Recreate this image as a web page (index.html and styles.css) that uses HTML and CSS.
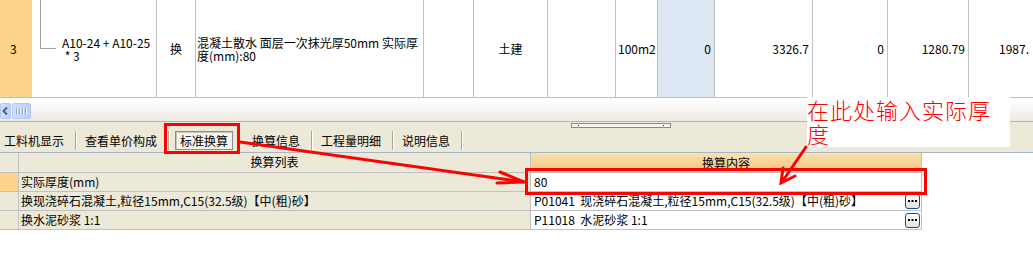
FILE: index.html
```html
<!DOCTYPE html>
<html lang="zh-CN">
<head>
    <meta charset="UTF-8">
    <title>标准换算</title>
    <link rel="stylesheet" href="styles.css">
</head>
<body>
    <!-- 定额行 -->
    <div class="item-grid">
        <div class="cell rownum">3</div>
        <div class="cell code">
            <span class="tree"></span>
            <span class="two-line">A10-24 + A10-25<br> * 3</span>
        </div>
        <div class="cell center">换</div>
        <div class="cell desc"><span class="two-line">混凝土散水 面层一次抹光厚50mm 实际厚<br>度(mm):80</span></div>
        <div class="cell"></div>
        <div class="cell center">土建</div>
        <div class="cell"></div>
        <div class="cell unit">100m2</div>
        <div class="cell num current">0</div>
        <div class="cell num">3326.7</div>
        <div class="cell num">0</div>
        <div class="cell num">1280.79</div>
        <div class="cell last">1987.</div>
    </div>

    <div class="hscroll">
        <span class="sb-btn">
            <svg width="7" height="8" viewBox="0 0 7 8"><path d="M5 0.5 L1.5 4 L5 7.5" fill="none" stroke="#4d6185" stroke-width="2"/></svg>
        </span>
        <span class="sb-thumb"><i></i><i></i><i></i><i></i></span>
    </div>

    <div class="toolbar">
        <div class="grip-row"><span class="grip"><i></i><i></i></span></div>
        <div class="tabs">
            <span class="tab first">工料机显示</span>
            <span class="sep"></span>
            <span class="tab">查看单价构成</span>
            <span class="sep"></span>
            <span class="tab pressed">标准换算</span>
            <span class="tab">换算信息</span>
            <span class="sep"></span>
            <span class="tab">工程量明细</span>
            <span class="sep"></span>
            <span class="tab">说明信息</span>
            <span class="sep"></span>
        </div>
    </div>

    <!-- 换算表 -->
    <div class="calc-grid">
        <div class="calc-row head">
            <span class="ind"></span>
            <span class="left">换算列表</span>
            <span class="right">换算内容</span>
        </div>
        <div class="calc-row">
            <span class="ind active"></span>
            <span class="left">实际厚度(mm)</span>
            <span class="right">80</span>
        </div>
        <div class="calc-row">
            <span class="ind"></span>
            <span class="left">换现浇碎石混凝土,粒径15mm,C15(32.5级)【中(粗)砂】</span>
            <span class="right">
                <span class="val">P01041  现浇碎石混凝土,粒径15mm,C15(32.5级)【中(粗)砂】</span>
                <span class="more"><svg width="13" height="13" viewBox="0 0 13 13"><rect x="2" y="5" width="2" height="2"/><rect x="5.5" y="5" width="2" height="2"/><rect x="9" y="5" width="2" height="2"/></svg></span>
            </span>
        </div>
        <div class="calc-row">
            <span class="ind"></span>
            <span class="left">换水泥砂浆 1:1</span>
            <span class="right">
                <span class="val">P11018  水泥砂浆 1:1</span>
                <span class="more"><svg width="13" height="13" viewBox="0 0 13 13"><rect x="2" y="5" width="2" height="2"/><rect x="5.5" y="5" width="2" height="2"/><rect x="9" y="5" width="2" height="2"/></svg></span>
            </span>
        </div>
    </div>

    <!-- 标注 -->
    <div class="note">在此处输入实际厚<br>度</div>
    <svg class="marks" width="1033" height="260" viewBox="0 0 1033 260">
        <g fill="none" stroke="#ff0000" stroke-width="3">
            <rect x="165.5" y="124.5" width="73" height="28"/>
            <rect x="526.5" y="169.5" width="399" height="24"/>
        </g>
        <g stroke="#ff0000" stroke-width="3" stroke-linecap="round" fill="none">
            <path d="M240 142 L524 182"/>
            <path d="M500 172 L524 182 L497 183"/>
            <path d="M806 147 L782 182"/>
            <path d="M783 168 L781 183 L795 176"/>
        </g>
    </svg>
</body>
</html>
```

FILE: styles.css
```css
body {
    margin: 0;
    width: 1033px;
    height: 260px;
    overflow: hidden;
    position: relative;
    background-color: #fff;
    font-family: "Noto Sans CJK SC", sans-serif;
    font-size: 12px;
    color: #000;
}
.item-grid {
    display: grid;
    grid-template-columns: 32px 125px 39px 228px 50px 74px 68px 42px 57px 98px 75px 81px 1fr;
    height: 98px;
    border-bottom: 1px solid #c0c0c0;
    box-sizing: border-box;
}
.item-grid .cell {
    display: flex;
    align-items: center;
    border-right: 1px solid #c0c0c0;
    white-space: pre;
    overflow: hidden;
}
.item-grid .rownum {
    background-color: #fdd28c;
    border-right: none;
    padding-left: 10px;
}
.item-grid .code {
    align-items: flex-start;
}
.tree {
    width: 15px;
    height: 48px;
    margin-left: 8px;
    margin-right: 6px;
    border-left: 1px solid #a0a0a0;
    border-bottom: 1px solid #a0a0a0;
    flex-shrink: 0;
}
.item-grid .code .two-line {
    align-self: center;
}
.two-line {
    line-height: 13px;
}
.item-grid .center {
    justify-content: center;
}
.item-grid .desc {
    padding-left: 1px;
}
.item-grid .unit {
    padding-left: 2px;
}
.item-grid .num {
    justify-content: flex-end;
    padding-right: 3px;
}
.item-grid .current {
    background-color: #dde7f4;
}
.item-grid .last {
    border-right: none;
    padding-left: 30px;
}
.hscroll {
    display: flex;
    align-items: center;
    height: 20px;
    margin-top: 3px;
    background: linear-gradient(#fefefd, #eceae2);
}
.sb-btn, .sb-thumb {
    display: flex;
    align-items: center;
    justify-content: center;
    height: 16px;
    box-sizing: border-box;
    border: 1px solid #b5c8f2;
    border-radius: 2px;
    background: linear-gradient(90deg, #d3e0fc, #bccffa);
}
.sb-btn {
    width: 11px;
}
.sb-thumb {
    width: 19px;
    margin-left: 1px;
    gap: 1px;
}
.sb-thumb i {
    width: 1px;
    height: 7px;
    background-color: #8fa8dc;
    border-right: 1px solid #eef3fe;
}
.toolbar {
    background-color: #ece9d8;
    border-top: 1px solid #a6b6c9;
    border-bottom: 1px solid #a6b6c9;
}
.grip-row {
    height: 7px;
    display: flex;
}
.grip {
    display: flex;
    align-items: center;
    justify-content: space-between;
    width: 100px;
    height: 5px;
    margin: 1px 0 0 571px;
    padding: 0 6px;
    box-sizing: border-box;
    border: 1px solid #8a8a8a;
    background-color: #f4f3ee;
}
.grip i {
    width: 1px;
    height: 1px;
    background-color: #0c1a6a;
}
.tabs {
    display: flex;
    align-items: center;
    height: 23px;
}
.tab {
    padding: 0 11px 0 8px;
    white-space: nowrap;
    line-height: 14px;
}
.tab.first {
    padding-left: 4px;
}
.tab.pressed {
    margin-left: 5px;
    margin-right: 11px;
    padding: 2px 4px 1px;
    background-color: #f5f4ef;
    border: 1px solid #8f8d80;
    box-shadow: inset 1px 1px 0 #c8c6b8;
}
.sep {
    width: 1px;
    height: 19px;
    background-color: #aca899;
    border-right: 1px solid #fff;
}
.calc-grid {
    width: 922px;
}
.calc-row {
    display: flex;
    height: 19px;
    border-bottom: 1px solid #c0c0c0;
    box-sizing: border-box;
    line-height: 18px;
    white-space: pre;
}
.calc-row.head {
    height: 20px;
}
.calc-row .ind {
    width: 19px;
    border-right: 1px solid #c0c0c0;
    box-sizing: border-box;
    background-color: #ece9d8;
}
.calc-row .ind.active {
    background-color: #fdd28c;
}
.calc-row .left {
    width: 512px;
    padding-left: 2px;
    border-right: 1px solid #c0c0c0;
    box-sizing: border-box;
    background-color: #ece9d8;
    overflow: hidden;
}
.calc-row .right {
    display: flex;
    align-items: center;
    width: 391px;
    padding-left: 3px;
    border-right: 1px solid #c0c0c0;
    box-sizing: border-box;
    background-color: #fff;
}
.calc-row.head .left, .calc-row.head .right {
    text-align: center;
    justify-content: center;
    padding-left: 0;
}
.calc-row.head .right {
    background: linear-gradient(#fae2b2, #f1c37a);
}
.calc-row .val {
    flex-grow: 1;
}
.more {
    display: flex;
    width: 15px;
    height: 15px;
    margin-right: 1px;
    box-sizing: border-box;
    border: 1px solid #1d4f7e;
    border-radius: 3px;
    background: linear-gradient(#ffffff, #e2e1da);
}
.note {
    position: absolute;
    left: 807px;
    top: 97px;
    width: 203px;
    height: 50px;
    background-color: #fff;
    color: #ff0000;
    font-size: 22px;
    font-weight: 300;
    line-height: 24px;
    letter-spacing: 1px;
    white-space: nowrap;
}
.marks {
    position: absolute;
    left: 0;
    top: 0;
    pointer-events: none;
}
```
